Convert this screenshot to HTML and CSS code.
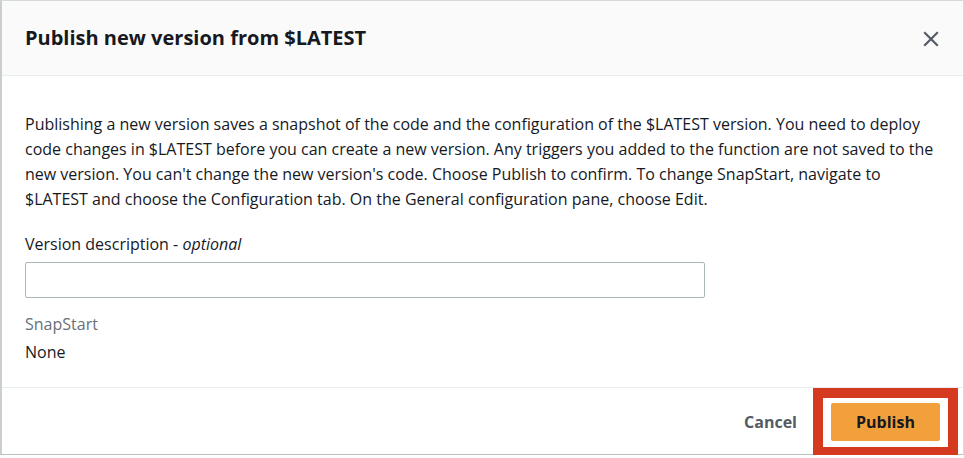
FILE: index.html
```html
<!DOCTYPE html>
<html>
<head>
<meta charset="utf-8">
<link rel="stylesheet" href="styles.css">
</head>
<body>
<div class="modal">
  <div class="modal-header">
    <h2 class="modal-title">Publish new version from $LATEST</h2>
    <button class="close-btn" aria-label="Close">
      <svg width="16" height="16" viewBox="0 0 16 16"><path d="M2 2 L14 14 M14 2 L2 14" stroke="#545b64" stroke-width="2.2" fill="none" stroke-linecap="square"/></svg>
    </button>
  </div>
  <div class="modal-body">
    <p class="intro">Publishing a new version saves a snapshot of the code and the configuration of the $LATEST version. You need to deploy code changes in $LATEST before you can create a new version. Any triggers you added to the function are not saved to the new version. You can't change the new version's code. Choose Publish to confirm. To change SnapStart, navigate to $LATEST and choose the Configuration tab. On the General configuration pane, choose Edit.</p>
    <label class="field-label">Version description - <i>optional</i></label>
    <input class="text-input" type="text">
    <div class="kv-label">SnapStart</div>
    <div class="kv-value">None</div>
  </div>
  <div class="modal-footer">
    <button class="btn-link">Cancel</button>
    <span class="primary-wrap">
      <button class="btn-primary">Publish</button>
      <span class="highlight"></span>
    </span>
  </div>
</div>
</body>
</html>
```
FILE: styles.css
```css
* { box-sizing: border-box; }
body {
  margin: 0;
  background: #fff;
  font-family: "Open Sans", "Noto Sans", sans-serif;
  color: #16191f;
}
.modal {
  width: 964px;
  height: 455px;
  border: 1px solid #d5dbdb;
  border-left: 2px solid #c9cfd0;
  border-bottom: 1px solid #b9bfc0;
  background: #fff;
  display: flex;
  flex-direction: column;
}
.modal-header {
  height: 75px;
  background: #fafafa;
  border-bottom: 1px solid #eaeded;
  display: flex;
  align-items: center;
  justify-content: space-between;
  padding: 0 24px 0 23px;
  flex-shrink: 0;
}
.modal-title {
  margin: 0;
  font-size: 20px;
  font-weight: 700;
  line-height: 26px;
}
.close-btn {
  border: 0;
  background: none;
  padding: 0;
  width: 16px;
  height: 16px;
  display: flex;
  margin-top: 2px;
}
.modal-body {
  padding: 0 23px;
  flex: 1;
  display: flex;
  flex-direction: column;
  align-items: flex-start;
}
.intro {
  margin: 36px 0 0;
  font-size: 16px;
  line-height: 25px;
}
.field-label {
  margin-top: 21px;
  font-size: 16px;
  line-height: 22px;
}
.field-label i { font-style: italic; }
.text-input {
  margin-top: 7px;
  width: 680px;
  height: 36px;
  border: 1px solid #aab7b8;
  border-radius: 2px;
  font: inherit;
}
.kv-label {
  margin-top: 15px;
  font-size: 16px;
  line-height: 22px;
  color: #687078;
}
.kv-value {
  margin-top: 6px;
  font-size: 16px;
  line-height: 22px;
}
.modal-footer {
  height: 67px;
  border-top: 1px solid #eaeded;
  display: flex;
  align-items: center;
  justify-content: flex-end;
  gap: 14px;
  padding: 0 23px 0 0;
  flex-shrink: 0;
}
.btn-link {
  border: 0;
  background: none;
  font: inherit;
  font-size: 16px;
  font-weight: 700;
  color: #545b64;
  padding: 0 20px;
  margin-top: 2px;
}
.primary-wrap {
  position: relative;
  display: flex;
  margin-top: 2px;
}
.btn-primary {
  width: 109px;
  height: 38px;
  border: 0;
  border-radius: 2px;
  background: #f2a03b;
  font: inherit;
  font-size: 16px;
  font-weight: 700;
  color: #16191f;
}
.highlight {
  position: absolute;
  left: -18px;
  right: -18px;
  top: -15px;
  bottom: -18px;
  border: 10px solid #d5391f;
  border-bottom-width: 12px;
  pointer-events: none;
}
```
